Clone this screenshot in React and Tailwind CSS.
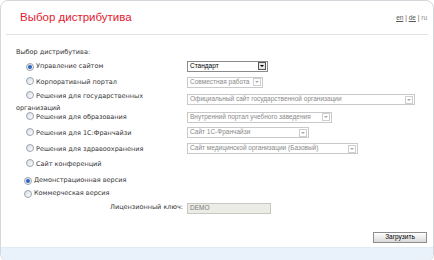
import React from 'react';

function Radio({ checked }) {
    return (
        <span className="inline-flex items-center justify-center w-[8px] h-[8px] rounded-full border border-[#97a4b1] bg-gradient-to-br from-[#d8dde3] to-white shrink-0">
            {checked && <span className="w-[4px] h-[4px] rounded-full bg-[#2f62c0]" />}
        </span>
    );
}

function Select({ value, width, disabled }) {
    return (
        <div
            className={`flex items-center justify-between h-[11px] bg-white border pl-[2px] pr-[1px] font-['Liberation_Sans',Arial,sans-serif] ${disabled ? 'border-[#c9c9c9] text-[#8a8a8a]' : 'border-[#8a8a8a] text-black'}`}
            style={{ width }}
        >
            <span className="text-[6.5px] leading-none whitespace-nowrap">{value}</span>
            <span className={`flex items-center justify-center w-[8px] h-[8px] border ${disabled ? 'border-[#cfcfcf] bg-white' : 'border-[#555] bg-[#e4e4e4]'}`}>
                <span className={`w-0 h-0 border-l-[2px] border-r-[2px] border-t-[2px] border-l-transparent border-r-transparent ${disabled ? 'border-t-[#a8a8a8]' : 'border-t-black'}`} />
            </span>
        </div>
    );
}

const rows = [
    { label: 'Управление сайтом', checked: true, select: 'Стандарт', w: 81, enabled: true, h: 'h-[14px] mt-[24px]' },
    { label: 'Корпоративный портал', select: 'Совместная работа', w: 76, h: 'h-[14px] mt-[2px]' },
    { label: 'Решения для государственных организаций', select: 'Официальный сайт государственной организации', w: 228, h: 'h-[21px] mt-[1px]', two: true },
    { label: 'Решения для образования', select: 'Внутренний портал учебного заведения', w: 145, h: 'h-[12px]' },
    { label: 'Решения для 1С:Франчайзи', select: 'Сайт 1С-Франчайзи', w: 122, h: 'h-[13px] mt-[3px]' },
    { label: 'Решения для здравоохранения', select: 'Сайт медицинской организации (Базовый)', w: 171, h: 'h-[13px] mt-[3px]' },
    { label: 'Сайт конференций', h: 'h-[12px] mt-[3px]' },
];

export default function App() {
    return (
        <div className="w-[434px] h-[260px] bg-white overflow-hidden font-['Liberation_Sans',Arial,sans-serif]">
            <div className="relative w-[434px] h-[262px] rounded-[8px] border border-[#d4d7db] overflow-hidden flex flex-col">
                <div className="flex items-center justify-between h-[33px] shrink-0 pl-[19px] pr-[6px]">
                    <h1 className="text-[11.5px] text-[#e3202f] font-normal">Выбор дистрибутива</h1>
                    <div className="text-[6.5px] text-[#555]">
                        <span className="underline">en</span> | <span className="underline">de</span> | <span className="text-[#8a8a8a]">ru</span>
                    </div>
                </div>
                <div className="mx-[5px] border-t border-[#e3e3e3] shrink-0" />

                <div className="relative h-[212px] shrink-0 pl-[15px] font-['DejaVu_Sans',Verdana,sans-serif] text-[6.5px] text-[#333]">
                    <div className="absolute left-[15px] top-[11px] leading-[12px]">Выбор дистрибутива:</div>
                    <div className="flex flex-col">
                        {rows.map((r, i) => (
                            <div key={i} className={`flex ${r.two ? 'items-start' : 'items-center'} ${r.h}`}>
                                <div className="w-[171px] shrink-0">
                                    <div className="w-[150px] leading-[12px]">
                                        <span className="ml-[10px] mr-[2px] inline-flex align-[-1px]"><Radio checked={r.checked} /></span>
                                        {r.label}
                                    </div>
                                </div>
                                {r.select && (
                                    <div className={r.two ? 'mt-[4px]' : ''}>
                                        <Select value={r.select} width={r.w} disabled={!r.enabled} />
                                    </div>
                                )}
                            </div>
                        ))}
                    </div>

                    <div className="mt-[4px] flex flex-col">
                        <div className="flex items-center h-[13px] pl-[8px] gap-[2px]">
                            <Radio checked />
                            <span>Демонстрационная версия</span>
                        </div>
                        <div className="flex items-center h-[13px] pl-[8px] gap-[2px]">
                            <Radio />
                            <span>Коммерческая версия</span>
                        </div>
                        <div className="flex items-center h-[14px] mt-[1px]">
                            <div className="w-[171px] text-right pr-[4px]">Лицензионный ключ:</div>
                            <div className="w-[84px] h-[11px] bg-[#ecece6] border border-[#c8c8c0] pl-[2px] flex items-center font-['Liberation_Sans',Arial,sans-serif] text-[6.5px] text-[#7a7a7a]">DEMO</div>
                        </div>
                    </div>

                    <div className="flex justify-end pr-[6px] mt-[17px]">
                        <button className="w-[54px] h-[11px] border border-[#8d8d8d] bg-gradient-to-b from-white to-[#d9d9d9] font-['Liberation_Sans',Arial,sans-serif] text-[6.5px] leading-none text-black">
                            Загрузить
                        </button>
                    </div>
                </div>

                <div className="flex-1 bg-[#e9f2fb] border-t border-[#e3ecf5]" />
            </div>
        </div>
    );
}
